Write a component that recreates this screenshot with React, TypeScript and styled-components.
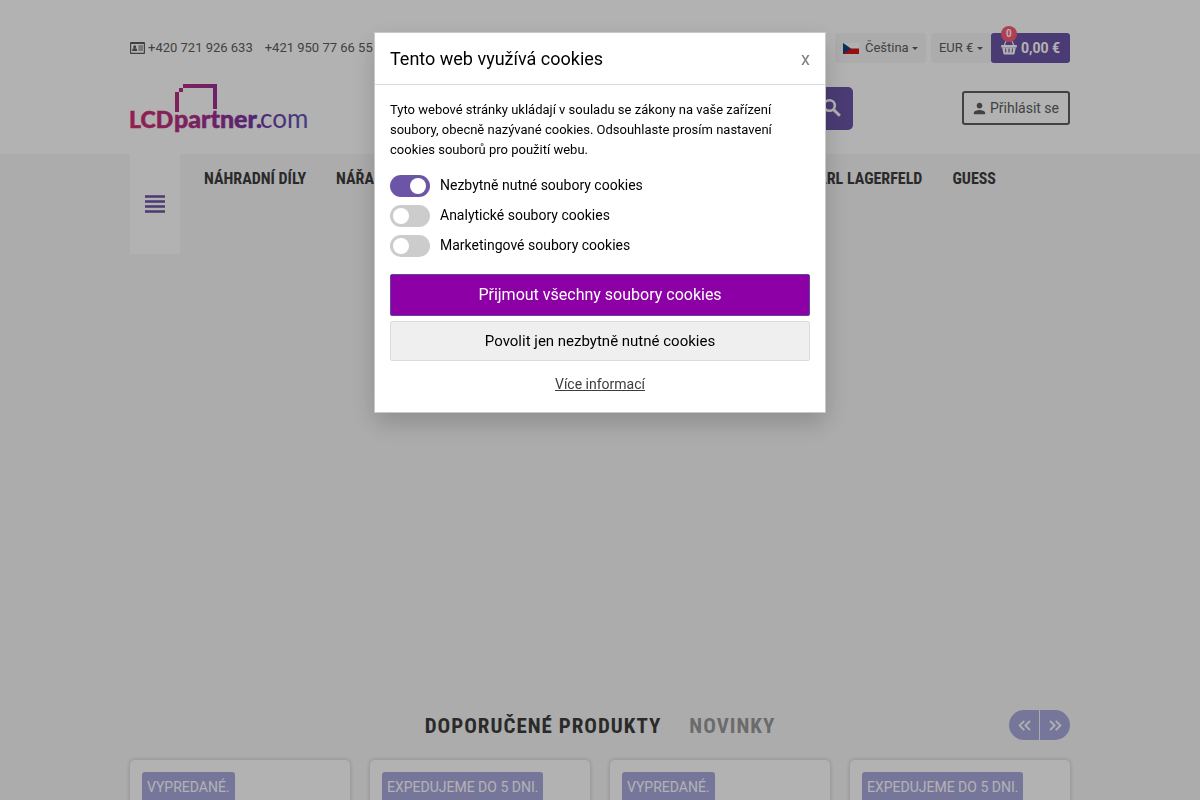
import React from 'react';
import styled, { createGlobalStyle } from 'styled-components';
import {
  MdKeyboardDoubleArrowLeft,
  MdKeyboardDoubleArrowRight,
  MdPerson,
  MdViewHeadline,
} from 'react-icons/md';

const purple = '#6c55a6';
const lilac = '#a9a9df';
const condensed = '"Roboto Condensed", Roboto, sans-serif';

const GlobalStyle = createGlobalStyle`
  *, *::before, *::after { box-sizing: border-box; }
  body {
    margin: 0;
    background: #f7f7f7;
    color: #5d5d5d;
    font: 14px/20px Roboto, sans-serif;
  }
  button, input, select { font: inherit; color: inherit; }
  button { cursor: pointer; }
  h1, h2, p, ul { margin: 0; padding: 0; }
  svg { display: block; flex: none; }
`;

const Container = styled.div`
  width: 100%;
  max-width: 970px;
  margin: 0 auto;
  padding: 0 15px;
`;

const Header = styled.header`
  background: #fff;
  padding: 33px 0 21px;
`;

const TopRow = styled.div`
  display: flex;
  align-items: center;
  height: 30px;
  font-size: 13px;
`;

const Phones = styled.div`
  display: flex;
  align-items: center;
  gap: 12px;
  margin-right: auto;
`;

const Phone = styled.a`
  display: flex;
  align-items: center;
  gap: 3px;
  color: inherit;
  text-decoration: none;
  white-space: nowrap;
`;

const Picker = styled.label`
  display: flex;
  align-items: center;
  height: 30px;
  margin-right: ${(p: { $gap: number }) => p.$gap}px;
  padding: 0 8px;
  border-radius: 3px;
  background: #f7f7f7;
`;

const PickerSelect = styled.select`
  appearance: none;
  margin: 0;
  padding: 0;
  border: 0;
  background: none;
`;

const Flag = styled.svg`
  margin-right: 6px;
`;

const Caret = styled.span`
  margin-left: 3px;
  border: 3px solid transparent;
  border-top-color: currentColor;
  border-bottom: 0;
`;

const CartButton = styled.button`
  position: relative;
  display: flex;
  align-items: center;
  gap: 4px;
  height: 30px;
  padding: 0 10px;
  border: 0;
  border-radius: 3px;
  background: ${purple};
  color: #fff;
  font-size: 14px;
  font-weight: 700;
`;

const CartBadge = styled.span`
  position: absolute;
  top: -7px;
  left: 10px;
  width: 16px;
  height: 16px;
  border-radius: 50%;
  background: #fd5b78;
  font-size: 10px;
  line-height: 16px;
  text-align: center;
`;

const BrandRow = styled.div`
  display: flex;
  align-items: center;
  height: 50px;
  margin-top: 20px;
`;

const SearchForm = styled.form`
  display: flex;
  flex: 0 1 468px;
  height: 43px;
  margin: 0 auto 0 75px;
`;

const SearchInput = styled.input`
  flex: 1;
  min-width: 0;
  padding: 0 15px;
  border: 0;
  border-radius: 5px 0 0 5px;
  background: #f7f7f7;
`;

const SearchButton = styled.button`
  display: flex;
  align-items: center;
  justify-content: center;
  width: 43px;
  padding: 0;
  border: 0;
  border-radius: 0 5px 5px 0;
  background: ${purple};
  color: #fff;
`;

const LoginButton = styled.button`
  display: flex;
  align-items: center;
  gap: 2px;
  height: 34px;
  padding: 0 9px 0 7px;
  border: 2px solid #5d5d5d;
  border-radius: 3px;
  background: none;
`;

const MenuArea = styled(Container)`
  min-height: 541px;
  background: linear-gradient(#f6f6f6, #f6f6f6) no-repeat 50% 0 / 760px 354px;
`;

const MenuBar = styled.div`
  display: flex;
  align-items: flex-start;
  gap: 24px;
`;

const MenuButton = styled.button`
  display: flex;
  align-items: center;
  justify-content: center;
  width: 50px;
  height: 100px;
  padding: 0;
  border: 0;
  background: #fff;
  color: ${purple};
`;

const Nav = styled.nav`
  display: flex;
  flex: 0 1 792px;
  gap: 30px;
  height: 50px;
`;

const NavLink = styled.a`
  color: #3d3d3d;
  font: 700 16px/50px ${condensed};
  text-decoration: none;
  text-transform: uppercase;
  white-space: nowrap;

  &.end {
    margin-left: auto;
  }
`;

const TabsRow = styled.div`
  display: grid;
  grid-template-columns: 1fr auto 1fr;
  align-items: center;
  height: 60px;
`;

const Tabs = styled.div`
  display: flex;
  grid-column: 2;
  gap: 28px;
  padding-top: 2px;
`;

const Tab = styled.button<{ $active?: boolean }>`
  padding: 0;
  border: 0;
  background: none;
  color: ${(p) => (p.$active ? '#3d3d3d' : '#9a9a9a')};
  font: 700 21px/30px ${condensed};
  letter-spacing: 1px;
  text-transform: uppercase;
  white-space: nowrap;
`;

const Pager = styled.div`
  display: flex;
  gap: 1px;
  justify-self: end;
`;

const PagerButton = styled.button`
  display: flex;
  align-items: center;
  justify-content: center;
  width: 30px;
  height: 30px;
  padding: 1px 0 0;
  border: 0;
  border-radius: 15px 0 0 15px;
  background: ${lilac};
  color: #fff;

  & + & {
    border-radius: 0 15px 15px 0;
  }
`;

const Products = styled.ul`
  display: grid;
  grid-template-columns: repeat(4, 1fr);
  gap: 20px;
  margin-top: 5px;
  list-style: none;
`;

const ProductCard = styled.li`
  min-height: 320px;
  padding: 12px;
  border-radius: 5px;
  background: #fff;
  box-shadow: 0 0 5px rgba(0, 0, 0, 0.2);
`;

const ProductLabel = styled.span`
  display: inline-block;
  padding: 5px;
  border-radius: 3px;
  background: ${lilac};
  color: #fff;
  white-space: nowrap;
`;

const Overlay = styled.div`
  position: fixed;
  inset: 0;
  padding: 32px 15px;
  background: rgba(0, 0, 0, 0.3);
`;

const Dialog = styled.section`
  max-width: 452px;
  margin: 0 auto;
  border: 1px solid #c8c8c8;
  background: #fff;
  box-shadow: 0 10px 24px rgba(0, 0, 0, 0.18);
  color: #000;
`;

const DialogHeader = styled.div`
  display: flex;
  align-items: center;
  justify-content: space-between;
  height: 52px;
  padding: 0 15px;
  border-bottom: 1px solid #d9dde0;
`;

const DialogTitle = styled.h1`
  font-size: 18px;
  font-weight: 400;
  line-height: 24px;
`;

const CloseButton = styled.button`
  padding: 0;
  border: 0;
  background: none;
  color: #7f7f7f;
  font-size: 18px;
`;

const DialogBody = styled.div`
  display: flex;
  flex-direction: column;
  padding: 15px 15px 18px;
`;

const Intro = styled.p`
  margin-bottom: 15px;
  font-size: 13px;
  line-height: 20px;
`;

const Options = styled.div`
  display: flex;
  flex-direction: column;
  gap: 8px;
  margin-bottom: 17px;
`;

const Option = styled.label`
  display: flex;
  gap: 10px;
  height: 22px;
`;

const Toggle = styled.input`
  appearance: none;
  width: 40px;
  height: 22px;
  margin: 0;
  padding: 3px;
  border-radius: 11px;
  background: #ccc;

  &::before {
    content: '';
    display: block;
    width: 16px;
    height: 16px;
    border-radius: 50%;
    background: #fff;
  }

  &:checked {
    background: ${purple};
  }

  &:checked::before {
    margin-left: 17px;
  }
`;

const AcceptButton = styled.button`
  height: 42px;
  margin-bottom: 5px;
  border: 1px solid #5b4a9c;
  border-radius: 2px;
  background: #8c00a5;
  color: #fff;
  font-size: 16px;
`;

const NecessaryButton = styled.button`
  height: 40px;
  margin-bottom: 13px;
  border: 1px solid #dcdcdc;
  border-radius: 2px;
  background: #efefef;
  color: #000;
  font-size: 15px;
`;

const MoreLink = styled.a`
  align-self: center;
  color: #3d3d3d;
`;

const Logo = () => (
  <svg width="180" height="50" viewBox="0 0 180 50" role="img" aria-label="LCDpartner.com">
    <defs>
      <linearGradient id="brand" gradientUnits="userSpaceOnUse" x1="0" y1="0" x2="180" y2="0">
        <stop offset="0" stopColor="#d42f70" />
        <stop offset="0.4" stopColor="#aa2f8e" />
        <stop offset="0.7" stopColor="#7435a5" />
        <stop offset="1" stopColor="#6258b4" />
      </linearGradient>
    </defs>
    <g fill="url(#brand)" fontFamily="Lato, sans-serif">
      <path d="M45 9h4v20h-4zM49 5h4v4h-4zM53 1h34v25h-4V5H53z" />
      <g fontWeight="900" stroke="url(#brand)" strokeWidth="0.5">
        <text x="-1" y="45" fontSize="23">LCD</text>
        <text x="44" y="45" fontSize="25">partner.</text>
      </g>
      <text x="130" y="45" fontSize="26" fontWeight="400">com</text>
    </g>
  </svg>
);

const ContactIcon = () => (
  <svg width="15" height="12" viewBox="0 0 15 12" fill="currentColor" aria-hidden="true">
    <path
      d="M1 0h13q1 0 1 1v10q0 1-1 1H1q-1 0-1-1V1q0-1 1-1zm.2 2v8.800h12.600V2z"
      fillRule="evenodd"
    />
    <circle cx="4.700" cy="4.800" r="1.500" />
    <path d="M2.300 9V8q0-1.700 1.300-1.700h2.200Q7.100 6.300 7.100 8v1zM8.300 3.500H13v1H8.300zM8.300 5.500H13v1H8.300zM8.300 7.500H13v1H8.300z" />
  </svg>
);

const SearchIcon = () => (
  <svg width="24" height="24" viewBox="0 0 24 24" fill="none" stroke="currentColor" aria-hidden="true">
    <circle cx="9.500" cy="9.500" r="5.300" strokeWidth="2.600" />
    <path d="m13.500 13.500 6.300 6.300" strokeWidth="3" />
  </svg>
);

const BasketIcon = () => (
  <svg width="16" height="16" viewBox="0 0 16 16" fill="none" stroke="currentColor">
    <path d="M3.300 5.500 4.600 1.900Q4.900.7 6 .7h4q1.100 0 1.400 1.200l1.300 3.600" strokeWidth="1.200" />
    <path d="M.2 5h15.600v2.500H.2z" fill="currentColor" stroke="none" />
    <path
      d="M1.200 7.500h13.600l-1.200 6.100q-.2.900-1.100.9h-9q-.9 0-1.100-.9zM4 8.500l.4 4h1l-.3-4zm3.400 0v4h1.200v-4zm3.500 0-.3 4h1l.4-4z"
      fill="currentColor"
      fillRule="evenodd"
      stroke="none"
    />
  </svg>
);

const CzechFlag = () => (
  <Flag width="16" height="11" viewBox="0 0 16 11" aria-hidden="true">
    <path d="M0 0h16v5.500H0z" fill="#fff" />
    <path d="M0 5.500h16V11H0z" fill="#d7141a" />
    <path d="m0 0 8 5.500L0 11z" fill="#11457e" />
  </Flag>
);

const options = [
  { label: 'Nezbytně nutné soubory cookies', on: true },
  { label: 'Analytické soubory cookies', on: false },
  { label: 'Marketingové soubory cookies', on: false },
];

const labels = ['VYPREDANÉ.', 'EXPEDUJEME DO 5 DNI.', 'VYPREDANÉ.', 'EXPEDUJEME DO 5 DNI.'];

export default function App() {
  return (
    <>
      <GlobalStyle />
      <Header>
        <Container>
          <TopRow>
            <Phones>
              <Phone href="tel:+420721926633">
                <ContactIcon />
                +420 721 926 633
              </Phone>
              <Phone href="tel:+421950776655">+421 950 77 66 55</Phone>
            </Phones>
            <Picker $gap={5}>
              <CzechFlag />
              <PickerSelect aria-label="Jazyk">
                <option>Čeština</option>
              </PickerSelect>
              <Caret />
            </Picker>
            <Picker $gap={0}>
              <PickerSelect aria-label="Měna">
                <option>EUR €</option>
              </PickerSelect>
              <Caret />
            </Picker>
            <CartButton>
              <BasketIcon />
              0,00 €
              <CartBadge>0</CartBadge>
            </CartButton>
          </TopRow>
          <BrandRow>
            <Logo />
            <SearchForm>
              <SearchInput type="search" aria-label="Hledat" />
              <SearchButton type="button" aria-label="Hledat">
                <SearchIcon />
              </SearchButton>
            </SearchForm>
            <LoginButton>
              <MdPerson size={17} />
              Přihlásit se
            </LoginButton>
          </BrandRow>
        </Container>
      </Header>

      <main>
        <MenuArea>
          <MenuBar>
            <MenuButton aria-label="Menu">
              <MdViewHeadline size={30} />
            </MenuButton>
            <Nav>
              <NavLink href="#dily">Náhradní díly</NavLink>
              <NavLink href="#naradi">Nářadí</NavLink>
              <NavLink href="#karl" className="end">Karl Lagerfeld</NavLink>
              <NavLink href="#guess">Guess</NavLink>
            </Nav>
          </MenuBar>
        </MenuArea>
        <Container>
          <TabsRow>
            <Tabs>
              <Tab $active>Doporučené produkty</Tab>
              <Tab>Novinky</Tab>
            </Tabs>
            <Pager>
              <PagerButton aria-label="Předchozí">
                <MdKeyboardDoubleArrowLeft size={21} />
              </PagerButton>
              <PagerButton aria-label="Další">
                <MdKeyboardDoubleArrowRight size={21} />
              </PagerButton>
            </Pager>
          </TabsRow>
          <Products>
            {labels.map((label, i) => (
              <ProductCard key={i}>
                <ProductLabel>{label}</ProductLabel>
              </ProductCard>
            ))}
          </Products>
        </Container>
      </main>

      <Overlay>
        <Dialog role="dialog" aria-modal="true" aria-labelledby="cookie-title">
          <DialogHeader>
            <DialogTitle id="cookie-title">Tento web využívá cookies</DialogTitle>
            <CloseButton aria-label="Zavřít">x</CloseButton>
          </DialogHeader>
          <DialogBody>
            <Intro>
              Tyto webové stránky ukládají v souladu se zákony na vaše zařízení soubory, obecně
              nazývané cookies. Odsouhlaste prosím nastavení cookies souborů pro použití webu.
            </Intro>
            <Options>
              {options.map((o) => (
                <Option key={o.label}>
                  <Toggle type="checkbox" defaultChecked={o.on} />
                  {o.label}
                </Option>
              ))}
            </Options>
            <AcceptButton>Přijmout všechny soubory cookies</AcceptButton>
            <NecessaryButton>Povolit jen nezbytně nutné cookies</NecessaryButton>
            <MoreLink href="#cookies">Více informací</MoreLink>
          </DialogBody>
        </Dialog>
      </Overlay>
    </>
  );
}
